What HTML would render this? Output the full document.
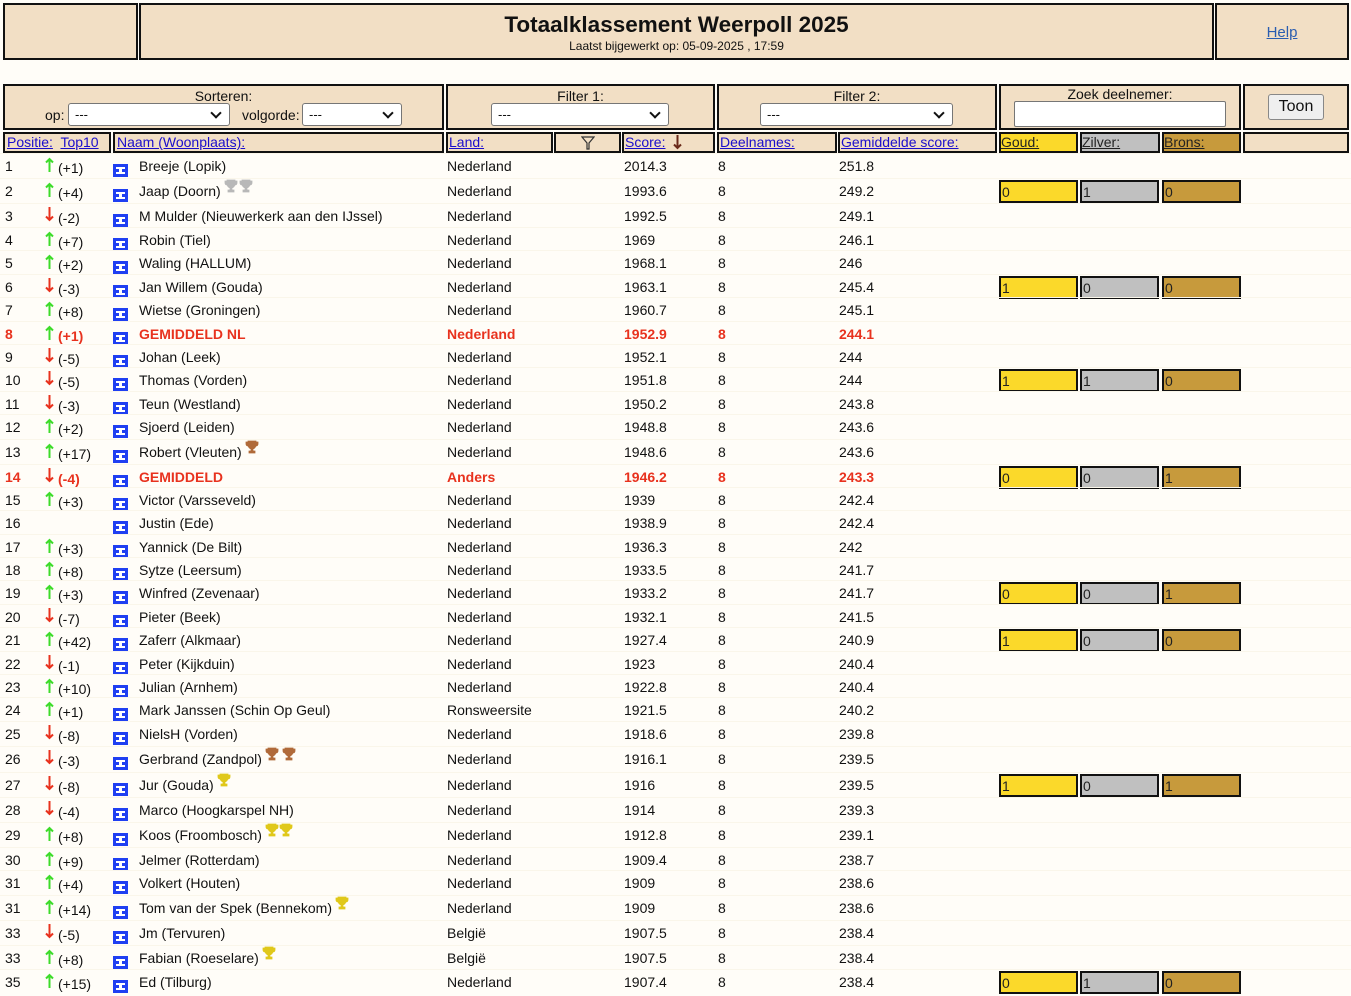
<!DOCTYPE html>
<html><head><meta charset="utf-8">
<style>
body{margin:0;background:#fffdf8;font-family:"Liberation Sans",Arial,sans-serif;font-size:14px;color:#111;width:1351px;height:993px;overflow:hidden;position:relative}
.b{position:absolute;background:#f2dfc5;border:2px solid #111;box-sizing:border-box}
a{color:#1a0dcc;text-decoration:underline}
.sel{position:absolute;background:#fff;border:1px solid #767676;border-radius:3px;box-sizing:border-box;height:23px;font-size:13px;padding-left:6px;line-height:21px}
.sel:after{content:"";position:absolute;right:9px;top:5px;width:6px;height:6px;border-right:2px solid #111;border-bottom:2px solid #111;transform:rotate(45deg)}
.r{position:absolute;left:0;width:1351px;height:24px;border-top:1px solid #faf6ea}
.r span{position:absolute;top:0;line-height:24px;white-space:nowrap}
.red span{color:#e8321e;font-weight:bold}
.fl{position:absolute;left:113px;top:10px}
.ar{position:absolute;left:45px;top:3px}
.m{position:absolute;top:1px;height:23px;border:2px solid #111;box-sizing:border-box;font-size:14px;line-height:20px;padding-left:1px;color:#222}
.g{left:999px;width:79px;background:#fbd92a}.s{left:1080px;width:79px;background:#c0c0c0}.z{left:1162px;width:79px;background:#c79a3c}
.p{left:5px}.c{left:58px;top:2px!important}.n{left:139px}.l{left:447px}.sc{left:624px}.d{left:718px}.av{left:839px}
.t{position:relative;top:-3px;margin-left:3px}
</style></head><body>
<svg width="0" height="0" style="position:absolute">
<defs>
<symbol id="fg" viewBox="0 0 15 13"><rect width="15" height="13" fill="#1f3ff2"/><path d="M3 3h9v2H9v3h3v2H3V8h3V5H3z" fill="#fff"/></symbol>
<symbol id="up" viewBox="0 0 9 15"><path d="M4.5 15V2M1 5.5l3.5-3.5 3.5 3.5" stroke="#3ddc2a" stroke-width="2" fill="none"/></symbol>
<symbol id="dn" viewBox="0 0 9 15"><path d="M4.5 0v13M1 9.5l3.5 3.5 3.5-3.5" stroke="#e8321e" stroke-width="2" fill="none"/></symbol>
<symbol id="cup" viewBox="0 0 14 14"><path d="M3 1h8v4a4 4 0 0 1-8 0z M3 2H1v2a2 2 0 0 0 2 2M11 2h2v2a2 2 0 0 1-2 2M6 9h2v2H6zM4 11h6v2H4z" fill="currentColor" stroke="currentColor" stroke-width=".8"/></symbol>
</defs></svg>

<div class="b" style="left:3px;top:3px;width:135px;height:57px"></div>
<div class="b" style="left:139px;top:3px;width:1075px;height:57px;text-align:center">
<div style="font-size:22.5px;font-weight:bold;margin-top:7px">Totaalklassement Weerpoll 2025</div>
<div style="font-size:12px;margin-top:1px">Laatst bijgewerkt op: 05-09-2025 , 17:59</div></div>
<div class="b" style="left:1215px;top:3px;width:134px;height:57px;text-align:center;line-height:55px"><a style="color:#2a5db0;font-size:15px">Help</a></div>

<div class="b" style="left:3px;top:84px;width:441px;height:46px;text-align:center;font-size:14px"><div style="margin-top:2px">Sorteren:</div></div>
<span style="position:absolute;left:45px;top:107px">op:</span><div class="sel" style="left:68px;top:103px;width:162px">---</div>
<span style="position:absolute;left:242px;top:107px">volgorde:</span><div class="sel" style="left:302px;top:103px;width:100px">---</div>
<div class="b" style="left:446px;top:84px;width:269px;height:46px;text-align:center"><div style="margin-top:2px">Filter 1:</div></div>
<div class="sel" style="left:491px;top:103px;width:178px">---</div>
<div class="b" style="left:717px;top:84px;width:280px;height:46px;text-align:center"><div style="margin-top:2px">Filter 2:</div></div>
<div class="sel" style="left:760px;top:103px;width:193px">---</div>
<div class="b" style="left:999px;top:84px;width:242px;height:46px;text-align:center"><div style="margin-top:0px">Zoek deelnemer:</div></div>
<div style="position:absolute;left:1014px;top:101px;width:212px;height:26px;border:1px solid #767676;background:#fff;box-sizing:border-box;border-radius:2px"></div>
<div class="b" style="left:1243px;top:84px;width:106px;height:46px"></div>
<div style="position:absolute;left:1268px;top:94px;width:56px;height:26px;border:1px solid #888;border-radius:3px;background:#efefef;box-sizing:border-box;text-align:center;line-height:24px;font-size:16px">Toon</div>

<div class="b" style="left:3px;top:132px;width:108px;height:21px;line-height:17px;padding-left:2px"><a>Positie:</a>&nbsp; <a>Top10</a></div>
<div class="b" style="left:113px;top:132px;width:331px;height:21px;line-height:17px;padding-left:2px"><a>Naam (Woonplaats):</a></div>
<div class="b" style="left:446px;top:132px;width:107px;height:21px;line-height:17px;padding-left:1px"><a>Land:</a></div>
<div class="b" style="left:554px;top:132px;width:67px;height:21px"><svg style="position:absolute;left:25px;top:2px" width="14" height="14" viewBox="0 0 14 14"><path d="M1 1h12L8 7v6H6V7z" fill="none" stroke="#333" stroke-width="1.2"/></svg></div>
<div class="b" style="left:622px;top:132px;width:93px;height:21px;line-height:17px;padding-left:1px"><a>Score:</a><svg style="position:absolute;left:49px;top:1px" width="9" height="15"><path d="M4.5 0v13M1 9.5l3.5 3.5 3.5-3.5" stroke="#6a2a1a" stroke-width="2" fill="none"/></svg></div>
<div class="b" style="left:717px;top:132px;width:120px;height:21px;line-height:17px;padding-left:1px"><a>Deelnames:</a></div>
<div class="b" style="left:838px;top:132px;width:159px;height:21px;line-height:17px;padding-left:1px"><a>Gemiddelde score:</a></div>
<div class="b" style="left:999px;top:132px;width:79px;height:21px;line-height:17px;background:#fbd92a"><a style="color:#222">Goud:</a></div>
<div class="b" style="left:1080px;top:132px;width:80px;height:21px;line-height:17px;background:#c0c0c0"><a style="color:#222">Zilver:</a></div>
<div class="b" style="left:1162px;top:132px;width:79px;height:21px;line-height:17px;background:#c79a3c"><a style="color:#222">Brons:</a></div>
<div class="b" style="left:1243px;top:132px;width:106px;height:21px"></div>

<div class="r" style="top:153px"><span class="p">1</span><svg class="ar" width="9" height="15"><use href="#up"/></svg><span class="c">(+1)</span><svg class="fl" width="15" height="13"><use href="#fg"/></svg><span class="n">Breeje (Lopik)</span><span class="l">Nederland</span><span class="sc">2014.3</span><span class="d">8</span><span class="av">251.8</span></div>
<div class="r" style="top:178px"><span class="p">2</span><svg class="ar" width="9" height="15"><use href="#up"/></svg><span class="c">(+4)</span><svg class="fl" width="15" height="13"><use href="#fg"/></svg><span class="n">Jaap (Doorn)<svg class="t" width="14" height="14" style="color:#b8b8b8"><use href="#cup"/></svg><svg class="t" width="14" height="14" style="color:#b8b8b8;margin-left:1px"><use href="#cup"/></svg></span><span class="l">Nederland</span><span class="sc">1993.6</span><span class="d">8</span><span class="av">249.2</span><div class="m g">0</div><div class="m s">1</div><div class="m z">0</div></div>
<div class="r" style="top:203px"><span class="p">3</span><svg class="ar" width="9" height="15"><use href="#dn"/></svg><span class="c">(-2)</span><svg class="fl" width="15" height="13"><use href="#fg"/></svg><span class="n">M Mulder (Nieuwerkerk aan den IJssel)</span><span class="l">Nederland</span><span class="sc">1992.5</span><span class="d">8</span><span class="av">249.1</span></div>
<div class="r" style="top:227px"><span class="p">4</span><svg class="ar" width="9" height="15"><use href="#up"/></svg><span class="c">(+7)</span><svg class="fl" width="15" height="13"><use href="#fg"/></svg><span class="n">Robin (Tiel)</span><span class="l">Nederland</span><span class="sc">1969</span><span class="d">8</span><span class="av">246.1</span></div>
<div class="r" style="top:250px"><span class="p">5</span><svg class="ar" width="9" height="15"><use href="#up"/></svg><span class="c">(+2)</span><svg class="fl" width="15" height="13"><use href="#fg"/></svg><span class="n">Waling (HALLUM)</span><span class="l">Nederland</span><span class="sc">1968.1</span><span class="d">8</span><span class="av">246</span></div>
<div class="r" style="top:274px"><span class="p">6</span><svg class="ar" width="9" height="15"><use href="#dn"/></svg><span class="c">(-3)</span><svg class="fl" width="15" height="13"><use href="#fg"/></svg><span class="n">Jan Willem (Gouda)</span><span class="l">Nederland</span><span class="sc">1963.1</span><span class="d">8</span><span class="av">245.4</span><div class="m g">1</div><div class="m s">0</div><div class="m z">0</div></div>
<div class="r" style="top:297px"><span class="p">7</span><svg class="ar" width="9" height="15"><use href="#up"/></svg><span class="c">(+8)</span><svg class="fl" width="15" height="13"><use href="#fg"/></svg><span class="n">Wietse (Groningen)</span><span class="l">Nederland</span><span class="sc">1960.7</span><span class="d">8</span><span class="av">245.1</span></div>
<div class="r red" style="top:321px"><span class="p">8</span><svg class="ar" width="9" height="15"><use href="#up"/></svg><span class="c">(+1)</span><svg class="fl" width="15" height="13"><use href="#fg"/></svg><span class="n">GEMIDDELD NL</span><span class="l">Nederland</span><span class="sc">1952.9</span><span class="d">8</span><span class="av">244.1</span></div>
<div class="r" style="top:344px"><span class="p">9</span><svg class="ar" width="9" height="15"><use href="#dn"/></svg><span class="c">(-5)</span><svg class="fl" width="15" height="13"><use href="#fg"/></svg><span class="n">Johan (Leek)</span><span class="l">Nederland</span><span class="sc">1952.1</span><span class="d">8</span><span class="av">244</span></div>
<div class="r" style="top:367px"><span class="p">10</span><svg class="ar" width="9" height="15"><use href="#dn"/></svg><span class="c">(-5)</span><svg class="fl" width="15" height="13"><use href="#fg"/></svg><span class="n">Thomas (Vorden)</span><span class="l">Nederland</span><span class="sc">1951.8</span><span class="d">8</span><span class="av">244</span><div class="m g">1</div><div class="m s">1</div><div class="m z">0</div></div>
<div class="r" style="top:391px"><span class="p">11</span><svg class="ar" width="9" height="15"><use href="#dn"/></svg><span class="c">(-3)</span><svg class="fl" width="15" height="13"><use href="#fg"/></svg><span class="n">Teun (Westland)</span><span class="l">Nederland</span><span class="sc">1950.2</span><span class="d">8</span><span class="av">243.8</span></div>
<div class="r" style="top:414px"><span class="p">12</span><svg class="ar" width="9" height="15"><use href="#up"/></svg><span class="c">(+2)</span><svg class="fl" width="15" height="13"><use href="#fg"/></svg><span class="n">Sjoerd (Leiden)</span><span class="l">Nederland</span><span class="sc">1948.8</span><span class="d">8</span><span class="av">243.6</span></div>
<div class="r" style="top:439px"><span class="p">13</span><svg class="ar" width="9" height="15"><use href="#up"/></svg><span class="c">(+17)</span><svg class="fl" width="15" height="13"><use href="#fg"/></svg><span class="n">Robert (Vleuten)<svg class="t" width="14" height="14" style="color:#b06a3a"><use href="#cup"/></svg></span><span class="l">Nederland</span><span class="sc">1948.6</span><span class="d">8</span><span class="av">243.6</span></div>
<div class="r red" style="top:464px"><span class="p">14</span><svg class="ar" width="9" height="15"><use href="#dn"/></svg><span class="c">(-4)</span><svg class="fl" width="15" height="13"><use href="#fg"/></svg><span class="n">GEMIDDELD</span><span class="l">Anders</span><span class="sc">1946.2</span><span class="d">8</span><span class="av">243.3</span><div class="m g" style="color:#222;font-weight:normal">0</div><div class="m s">0</div><div class="m z">1</div></div>
<div class="r" style="top:487px"><span class="p">15</span><svg class="ar" width="9" height="15"><use href="#up"/></svg><span class="c">(+3)</span><svg class="fl" width="15" height="13"><use href="#fg"/></svg><span class="n">Victor (Varsseveld)</span><span class="l">Nederland</span><span class="sc">1939</span><span class="d">8</span><span class="av">242.4</span></div>
<div class="r" style="top:510px"><span class="p">16</span><svg class="fl" width="15" height="13"><use href="#fg"/></svg><span class="n">Justin (Ede)</span><span class="l">Nederland</span><span class="sc">1938.9</span><span class="d">8</span><span class="av">242.4</span></div>
<div class="r" style="top:534px"><span class="p">17</span><svg class="ar" width="9" height="15"><use href="#up"/></svg><span class="c">(+3)</span><svg class="fl" width="15" height="13"><use href="#fg"/></svg><span class="n">Yannick (De Bilt)</span><span class="l">Nederland</span><span class="sc">1936.3</span><span class="d">8</span><span class="av">242</span></div>
<div class="r" style="top:557px"><span class="p">18</span><svg class="ar" width="9" height="15"><use href="#up"/></svg><span class="c">(+8)</span><svg class="fl" width="15" height="13"><use href="#fg"/></svg><span class="n">Sytze (Leersum)</span><span class="l">Nederland</span><span class="sc">1933.5</span><span class="d">8</span><span class="av">241.7</span></div>
<div class="r" style="top:580px"><span class="p">19</span><svg class="ar" width="9" height="15"><use href="#up"/></svg><span class="c">(+3)</span><svg class="fl" width="15" height="13"><use href="#fg"/></svg><span class="n">Winfred (Zevenaar)</span><span class="l">Nederland</span><span class="sc">1933.2</span><span class="d">8</span><span class="av">241.7</span><div class="m g">0</div><div class="m s">0</div><div class="m z">1</div></div>
<div class="r" style="top:604px"><span class="p">20</span><svg class="ar" width="9" height="15"><use href="#dn"/></svg><span class="c">(-7)</span><svg class="fl" width="15" height="13"><use href="#fg"/></svg><span class="n">Pieter (Beek)</span><span class="l">Nederland</span><span class="sc">1932.1</span><span class="d">8</span><span class="av">241.5</span></div>
<div class="r" style="top:627px"><span class="p">21</span><svg class="ar" width="9" height="15"><use href="#up"/></svg><span class="c">(+42)</span><svg class="fl" width="15" height="13"><use href="#fg"/></svg><span class="n">Zaferr (Alkmaar)</span><span class="l">Nederland</span><span class="sc">1927.4</span><span class="d">8</span><span class="av">240.9</span><div class="m g">1</div><div class="m s">0</div><div class="m z">0</div></div>
<div class="r" style="top:651px"><span class="p">22</span><svg class="ar" width="9" height="15"><use href="#dn"/></svg><span class="c">(-1)</span><svg class="fl" width="15" height="13"><use href="#fg"/></svg><span class="n">Peter (Kijkduin)</span><span class="l">Nederland</span><span class="sc">1923</span><span class="d">8</span><span class="av">240.4</span></div>
<div class="r" style="top:674px"><span class="p">23</span><svg class="ar" width="9" height="15"><use href="#up"/></svg><span class="c">(+10)</span><svg class="fl" width="15" height="13"><use href="#fg"/></svg><span class="n">Julian (Arnhem)</span><span class="l">Nederland</span><span class="sc">1922.8</span><span class="d">8</span><span class="av">240.4</span></div>
<div class="r" style="top:697px"><span class="p">24</span><svg class="ar" width="9" height="15"><use href="#up"/></svg><span class="c">(+1)</span><svg class="fl" width="15" height="13"><use href="#fg"/></svg><span class="n">Mark Janssen (Schin Op Geul)</span><span class="l">Ronsweersite</span><span class="sc">1921.5</span><span class="d">8</span><span class="av">240.2</span></div>
<div class="r" style="top:721px"><span class="p">25</span><svg class="ar" width="9" height="15"><use href="#dn"/></svg><span class="c">(-8)</span><svg class="fl" width="15" height="13"><use href="#fg"/></svg><span class="n">NielsH (Vorden)</span><span class="l">Nederland</span><span class="sc">1918.6</span><span class="d">8</span><span class="av">239.8</span></div>
<div class="r" style="top:746px"><span class="p">26</span><svg class="ar" width="9" height="15"><use href="#dn"/></svg><span class="c">(-3)</span><svg class="fl" width="15" height="13"><use href="#fg"/></svg><span class="n">Gerbrand (Zandpol)<svg class="t" width="14" height="14" style="color:#b06a3a"><use href="#cup"/></svg><svg class="t" width="14" height="14" style="color:#b06a3a"><use href="#cup"/></svg></span><span class="l">Nederland</span><span class="sc">1916.1</span><span class="d">8</span><span class="av">239.5</span></div>
<div class="r" style="top:772px"><span class="p">27</span><svg class="ar" width="9" height="15"><use href="#dn"/></svg><span class="c">(-8)</span><svg class="fl" width="15" height="13"><use href="#fg"/></svg><span class="n">Jur (Gouda)<svg class="t" width="14" height="14" style="color:#e0c81a"><use href="#cup"/></svg></span><span class="l">Nederland</span><span class="sc">1916</span><span class="d">8</span><span class="av">239.5</span><div class="m g">1</div><div class="m s">0</div><div class="m z">1</div></div>
<div class="r" style="top:797px"><span class="p">28</span><svg class="ar" width="9" height="15"><use href="#dn"/></svg><span class="c">(-4)</span><svg class="fl" width="15" height="13"><use href="#fg"/></svg><span class="n">Marco (Hoogkarspel NH)</span><span class="l">Nederland</span><span class="sc">1914</span><span class="d">8</span><span class="av">239.3</span></div>
<div class="r" style="top:822px"><span class="p">29</span><svg class="ar" width="9" height="15"><use href="#up"/></svg><span class="c">(+8)</span><svg class="fl" width="15" height="13"><use href="#fg"/></svg><span class="n">Koos (Froombosch)<svg class="t" width="14" height="14" style="color:#e0c81a"><use href="#cup"/></svg><svg class="t" width="14" height="14" style="color:#e0c81a;margin-left:0"><use href="#cup"/></svg></span><span class="l">Nederland</span><span class="sc">1912.8</span><span class="d">8</span><span class="av">239.1</span></div>
<div class="r" style="top:847px"><span class="p">30</span><svg class="ar" width="9" height="15"><use href="#up"/></svg><span class="c">(+9)</span><svg class="fl" width="15" height="13"><use href="#fg"/></svg><span class="n">Jelmer (Rotterdam)</span><span class="l">Nederland</span><span class="sc">1909.4</span><span class="d">8</span><span class="av">238.7</span></div>
<div class="r" style="top:870px"><span class="p">31</span><svg class="ar" width="9" height="15"><use href="#up"/></svg><span class="c">(+4)</span><svg class="fl" width="15" height="13"><use href="#fg"/></svg><span class="n">Volkert (Houten)</span><span class="l">Nederland</span><span class="sc">1909</span><span class="d">8</span><span class="av">238.6</span></div>
<div class="r" style="top:895px"><span class="p">31</span><svg class="ar" width="9" height="15"><use href="#up"/></svg><span class="c">(+14)</span><svg class="fl" width="15" height="13"><use href="#fg"/></svg><span class="n">Tom van der Spek (Bennekom)<svg class="t" width="14" height="14" style="color:#e0c81a"><use href="#cup"/></svg></span><span class="l">Nederland</span><span class="sc">1909</span><span class="d">8</span><span class="av">238.6</span></div>
<div class="r" style="top:920px"><span class="p">33</span><svg class="ar" width="9" height="15"><use href="#dn"/></svg><span class="c">(-5)</span><svg class="fl" width="15" height="13"><use href="#fg"/></svg><span class="n">Jm (Tervuren)</span><span class="l">België</span><span class="sc">1907.5</span><span class="d">8</span><span class="av">238.4</span></div>
<div class="r" style="top:945px"><span class="p">33</span><svg class="ar" width="9" height="15"><use href="#up"/></svg><span class="c">(+8)</span><svg class="fl" width="15" height="13"><use href="#fg"/></svg><span class="n">Fabian (Roeselare)<svg class="t" width="14" height="14" style="color:#e0c81a"><use href="#cup"/></svg></span><span class="l">België</span><span class="sc">1907.5</span><span class="d">8</span><span class="av">238.4</span></div>
<div class="r" style="top:969px"><span class="p">35</span><svg class="ar" width="9" height="15"><use href="#up"/></svg><span class="c">(+15)</span><svg class="fl" width="15" height="13"><use href="#fg"/></svg><span class="n">Ed (Tilburg)</span><span class="l">Nederland</span><span class="sc">1907.4</span><span class="d">8</span><span class="av">238.4</span><div class="m g">0</div><div class="m s">1</div><div class="m z">0</div></div>
</body></html>
